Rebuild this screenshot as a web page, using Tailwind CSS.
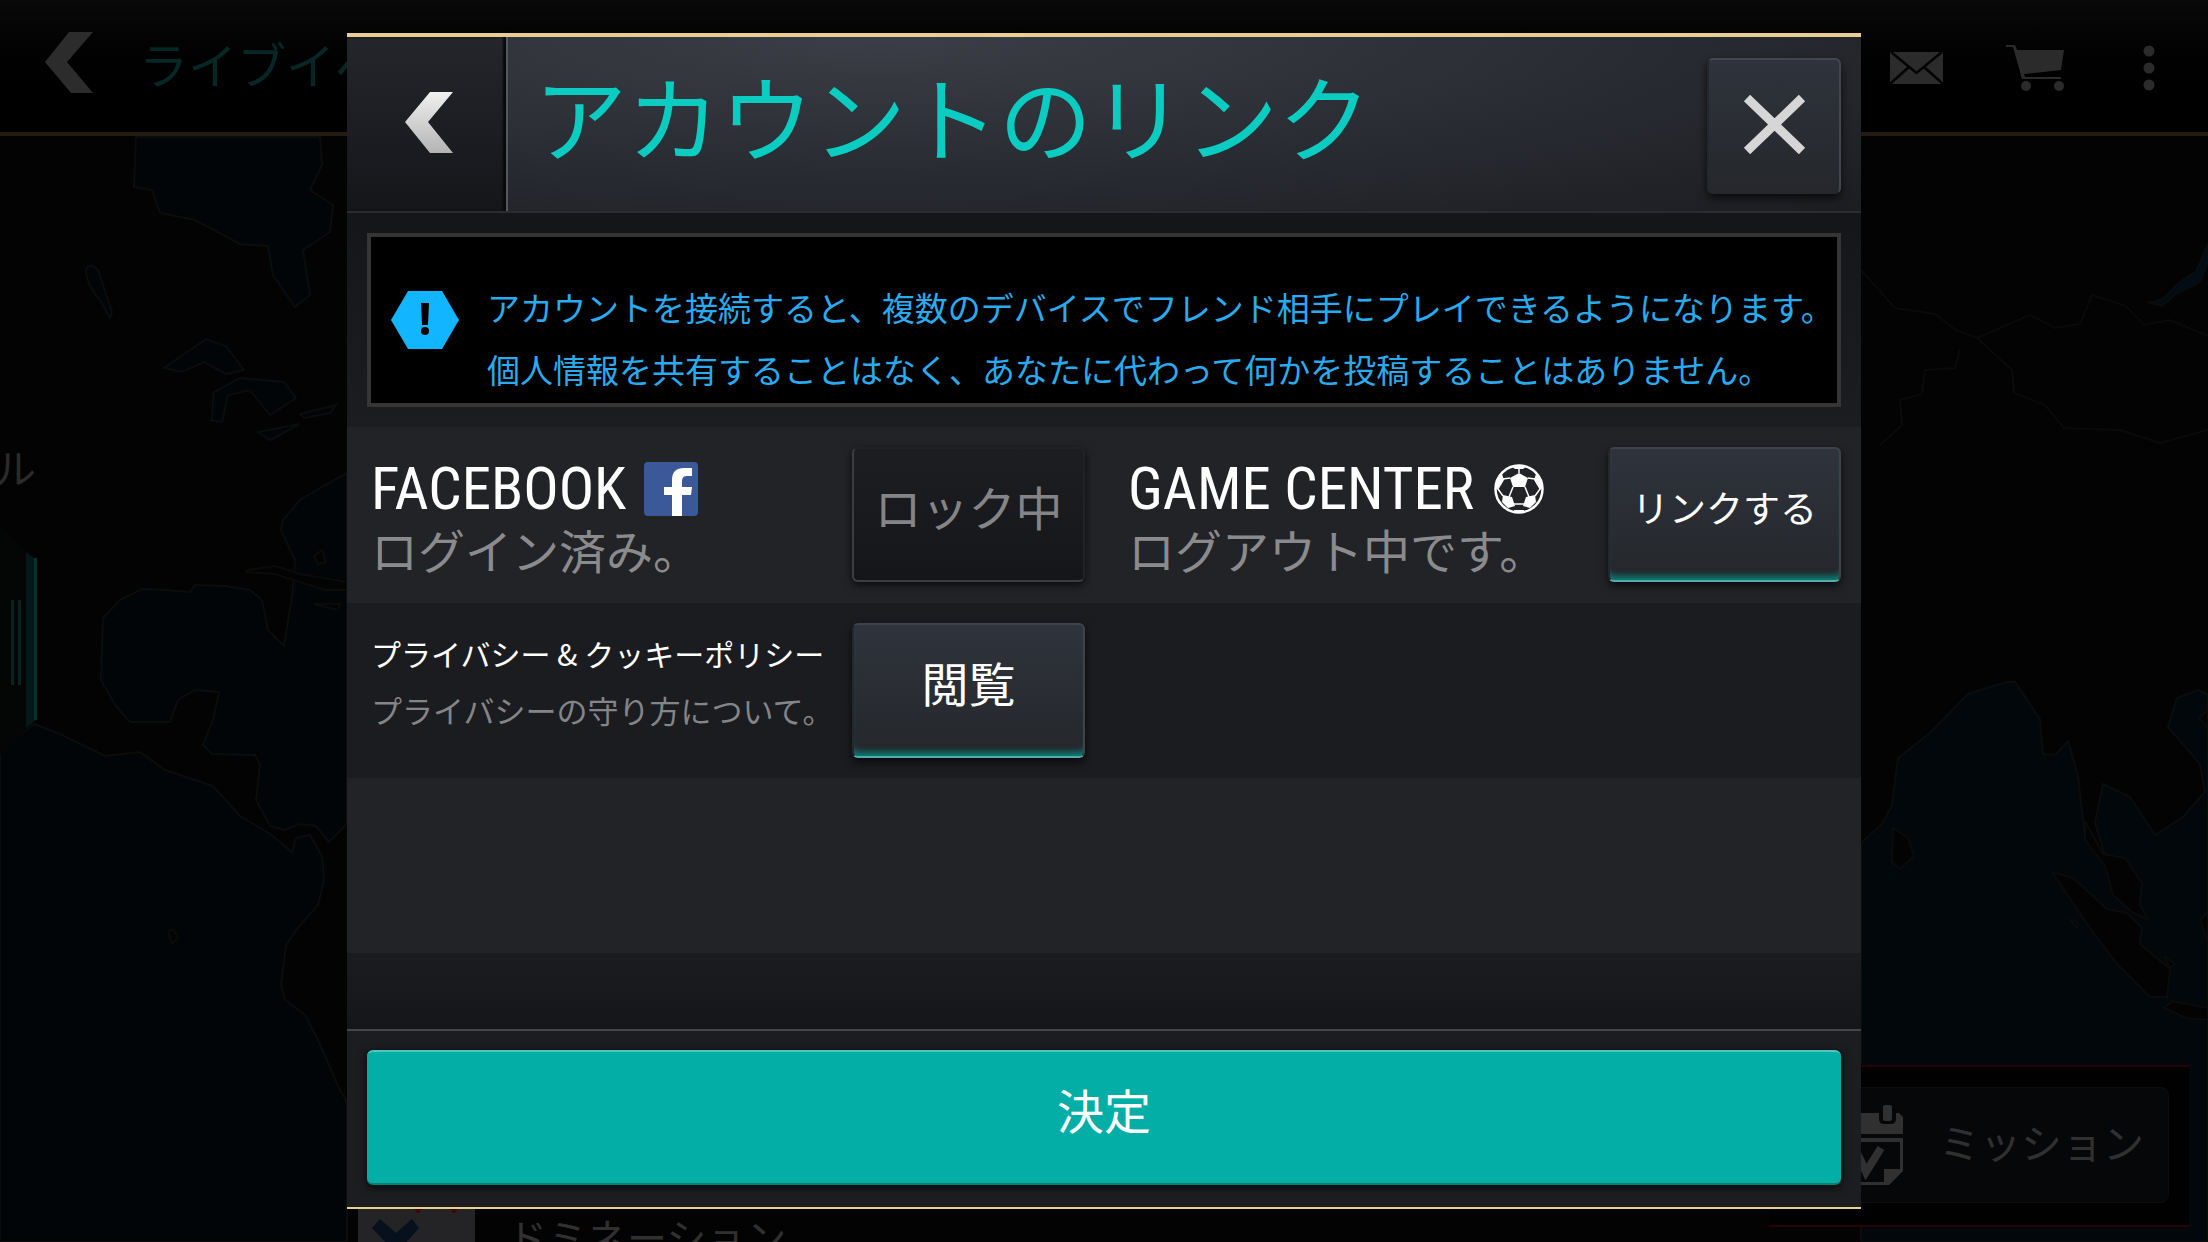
<!DOCTYPE html>
<html lang="ja">
<head>
  <meta charset="UTF-8" />
  <meta name="viewport" content="width=device-width, initial-scale=1.0" />
  <title>アカウントのリンク</title>
  <script src="https://cdn.jsdelivr.net/npm/@tailwindcss/browser@4"></script>
</head>
<body class="relative min-h-screen overflow-hidden bg-[#030303] font-['Roboto_Condensed','Roboto','Noto_Sans_CJK_JP',sans-serif] text-white">

  <!-- World map -->
  <svg class="absolute inset-0 h-full w-full" viewBox="0 0 2208 1242" preserveAspectRatio="xMidYMid slice" aria-hidden="true">
    <g fill="#010508" stroke="#0b0c0c" stroke-width="2">
      <path d="M136 137L134 187L152 190L160 213L195 220L240 244L268 246L273 275L295 307L310 295L303 250L330 232L333 205L310 190L322 165L320 137Z"/>
      <path d="M86 270Q90 262 98 270L112 312L110 318L100 300Q86 284 86 270Z"/>
      <path d="M164 368L190 350L206 339L226 346L244 370L226 374L204 362L182 372Z"/>
      <path d="M212 420L214 392L240 378L284 382L296 398L270 415L250 390L228 395L222 422L210 420Z"/>
      <path d="M300 414L336 405L330 413L304 418Z"/>
      <path d="M258 432L300 424L270 440Z"/>
      <path d="M347 473L325 485L300 500L283 520L281 530L295 560L293 590L284 646L268 630L262 600L250 590L225 586L195 585L190 592L165 590L142 589L120 600L103 618L101 680L115 705L130 722L170 722L178 700L195 690L219 692L213 720L203 745L212 754L255 755L260 765L256 800L270 826L284 830L300 824L316 826L329 842L347 824Z"/>
      <path d="M0 750L34 724L60 734L105 756L140 752L165 770L213 786L240 816L270 834L292 852L296 838L310 835L322 856L324 880L318 905L300 925L286 945L281 985L285 1000L305 1015L318 1040L340 1090L347 1102V1242H0Z"/>
      <path fill="#01070b" d="M1861 843L1883 823L1892 805L1898 758L1930 733L1968 694L2007 682L2015 682L2040 719L2043 754L2055 755L2068 741L2078 776L2085 837L2107 862L2095 823L2103 784L2130 797L2155 835L2183 817L2205 792L2200 764L2168 727L2177 698L2198 690L2208 694V1242H1861Z"/>
      <path fill="#000d14" d="M2148 302Q2160 304 2170 292T2196 272L2208 244V262L2200 282L2176 294L2162 306Z"/>
    </g>
    <g fill="#030303" stroke="#0b0b0a" stroke-width="2">
      <path d="M246 572L248 570L275 566L300 574L347 582V590L325 590L300 582L275 574Z"/>
      <path d="M314 556L322 550L326 562L318 564ZM314 604L340 604L338 610Z"/>
      <path d="M168 932Q174 926 178 938L172 944Z"/>
      <path d="M1893 828L1908 838L1914 856L1900 869L1892 862Z"/>
      <path d="M2052 872L2073 878L2107 909L2127 913L2142 928L2140 944L2170 969L2167 997L2150 997L2117 964L2090 928Z"/>
      <path d="M2085 821L2103 854L2125 858L2142 883L2140 905L2148 919L2133 913L2113 895L2105 866L2085 840Z"/>
      <path d="M2164 1008L2172 1001L2208 1008V1020L2186 1018ZM2070 920L2078 922L2077 928ZM2164 956L2175 964L2170 968ZM2208 912L2200 920L2208 942ZM2208 710L2199 718L2208 728Z"/>
    </g>
    <path fill="none" stroke="#0a0a0a" stroke-width="2" d="M1861 270L1895 308L1935 314L1956 330L1977 338L2030 315L2055 328L2080 324L2092 295L2126 306L2144 325L2170 320L2208 336M1977 338L2012 370L2014 393L2045 405L2064 428L2120 430L2160 443L2208 430M1960 350L1955 368L1925 370L1922 394L1900 400L1902 425L1880 445"/>
    <!-- Side drawer handle -->
    <path fill="#040606" d="M0 525L36 560V720L0 755Z"/>
    <path fill="#051818" d="M26 552L36 560V720L26 728Z"/>
    <path fill="#063231" d="M34 558H37V720H34Z"/>
    <path fill="#052423" d="M11 600H14V685H11ZM18 600H21V685H18Z"/>
  </svg>

  <!-- Page under the dialog -->
  <header class="absolute inset-x-0 top-0 flex h-[136px] items-center justify-between border-b-4 border-[#241b10] bg-linear-to-b from-[#090909] to-black pr-[53px] pb-2 pl-[45px]">
    <div class="flex items-center">
      <button type="button" aria-label="戻る">
        <svg class="h-[61px] w-12" viewBox="0 0 48 61"><path fill="#2c2c2c" d="M24 0H48L22 30L48 61H26L0 30Z"/></svg>
      </button>
      <h2 class="ml-[46px] pt-3 text-[49px] leading-[60px] text-[#052826]">ライブイベント</h2>
    </div>
    <div class="flex items-center gap-[63px] pt-3 text-[#2b2b2b]">
      <button type="button" aria-label="メール">
        <svg class="h-8 w-[53px]" viewBox="0 0 53 32"><path fill="currentColor" d="M0 0H53V32H0Z"/><path fill="none" stroke="#030303" stroke-width="2.5" d="M1 0L26.500 21L52 0M0 32L19 15M53 32L34 15"/></svg>
      </button>
      <button type="button" aria-label="ショップ">
        <svg class="h-[46px] w-[58px]" viewBox="0 0 58 46"><path fill="currentColor" d="M0 0H9L11 5H58L55 25L18 29L19 32H55V34H16L7 2H0Z"/><circle cx="20" cy="41" r="5" fill="currentColor"/><circle cx="53" cy="41" r="5" fill="currentColor"/></svg>
      </button>
      <button type="button" aria-label="メニュー" class="pl-4">
        <svg class="h-[46px] w-3" viewBox="0 0 12 46"><g fill="currentColor"><circle cx="6" cy="6" r="5.500"/><circle cx="6" cy="23" r="5.500"/><circle cx="6" cy="40" r="5.500"/></g></svg>
      </button>
    </div>
  </header>
  <span class="absolute top-[440px] -left-[5px] text-[41px] leading-[60px] text-[#2b2b2b]">ル</span>

  <div class="absolute right-[19px] bottom-[15px] w-[420px] border-y-2 border-[#260003] bg-[#010102] px-5 pt-5 pb-[22px]">
    <button type="button" class="flex h-[116px] w-full items-center justify-end gap-9 rounded-lg border border-[#0c0d0e] bg-[#060708] pr-6 text-[41px] text-[#303030]">
      <svg class="h-20 w-[66px]" viewBox="0 0 66 80">
        <path fill="currentColor" d="M0 8H42V14Q42 19 47 19H54Q59 19 59 14V8H62L66 12V29H0ZM46 2Q46 0 48 0H53Q55 0 55 2V13Q55 16 53 16H48Q46 16 46 13Z"/>
        <path fill="currentColor" d="M0 33H66V66L52 80H0V77H47V64H63V37H0Z"/>
        <path fill="none" stroke="currentColor" stroke-width="8" d="M20 48L29 67L44 43"/>
      </svg>
      <span class="leading-[60px]">ミッション</span>
    </button>
  </div>

  <div class="absolute top-[1178px] left-[358px] flex gap-8">
    <svg class="h-20 w-[117px]" viewBox="0 0 117 80">
      <path fill="#242326" d="M0 0H117V80H0Z"/>
      <path fill="#430309" d="M50 22H70L60 36ZM86 22H106L96 36Z"/>
      <path fill="#07101d" d="M14 50L22 41L38 55L54 41L61 50L44 69V80H32V69Z"/>
    </svg>
    <div class="text-[#303030]">
      <p class="text-[32px] leading-[34px] text-[#3a3010]">NEW</p>
      <p class="text-[40px] leading-[56px]">ドミネーション</p>
    </div>
  </div>

  <!-- Dialog -->
  <main class="relative mx-auto mt-[33px] w-full max-w-[1514px] border-t-4 border-b-2 border-[#e8cf8f] bg-[#1b1c20]" role="dialog" aria-labelledby="dialog-title">
    <header class="flex h-[176px] border-b-2 border-[#2b2c30] bg-radial-[at_35%_0%] from-[#3b3e46] via-[#2a2d34] to-[#1c1d21]">
      <button type="button" aria-label="戻る" class="flex w-[161px] shrink-0 items-center justify-center border-r-2 border-[#55575b] bg-linear-to-b from-[#24262b] to-[#15161a] pb-1 pl-1 shadow-[inset_-3px_0_2px_#08090a]">
        <svg class="h-[61px] w-12" viewBox="0 0 48 61">
          <defs><linearGradient id="steel" x1="0" y1="0" x2="0" y2="1"><stop offset="0" stop-color="#f0f0f0"/><stop offset="1" stop-color="#b4b4b4"/></linearGradient></defs>
          <path fill="url(#steel)" d="M25 0H48L23 30L48 61H25L0 30Z"/>
        </svg>
      </button>
      <h1 id="dialog-title" class="min-w-0 grow self-center pl-[26px] text-[93px] leading-[120px] whitespace-nowrap text-[#0bccc0]">アカウントのリンク</h1>
      <button type="button" aria-label="閉じる" class="mt-[21px] mr-5 flex h-[136px] w-[134px] shrink-0 items-center justify-center rounded-md border-2 border-[#43474d] border-b-[#24272b] border-l-[#24272b] bg-linear-to-b from-[#2f333c] to-[#25272b] pb-1 shadow-[0_4px_8px_#000000b0]">
        <svg class="h-[61px] w-[63px]" viewBox="0 0 63 61"><path stroke="#d6d6d6" stroke-width="9" d="M4 4L59 57M59 4L4 57"/></svg>
      </button>
    </header>

    <section class="bg-linear-to-b from-[#15161a] to-[#1c1d21] px-5 py-5">
      <div class="flex h-[174px] border-4 border-[#353535] bg-black pl-5">
        <svg class="mt-[54px] h-[58px] w-[68px] shrink-0" viewBox="0 0 68 58">
          <path fill="#12b5ff" d="M17 0H51L68 29L51 58H17L0 29Z"/>
          <path fill="#000" d="M30 12H38L37 34H31Z"/><circle cx="34" cy="40" r="4" fill="#000"/>
        </svg>
        <p class="ml-7 pt-[42px] text-[33px] leading-[62px] whitespace-nowrap text-[#29abf0]">アカウントを接続すると、複数のデバイスでフレンド相手にプレイできるようになります。<br />個人情報を共有することはなく、あなたに代わって何かを投稿することはありません。</p>
      </div>
    </section>

    <section class="grid grid-cols-2 bg-[#222327]">
      <div class="flex justify-between py-5 pr-[19px] pl-6">
        <div class="pt-3 whitespace-nowrap">
          <h2 class="flex items-center gap-[18px] text-[59px] leading-[60px]">FACEBOOK
            <svg class="h-[54px] w-[54px]" viewBox="0 0 54 54"><rect width="54" height="54" rx="4" fill="#3b5998"/><path fill="#fff" d="M28 54V33H20V25H28V18Q28 6 40 6H48V14H43Q38 14 38 19V25H48L47 33H38V54Z"/></svg>
          </h2>
          <p class="mt-1 text-[47px] leading-[60px] text-[#8b8b8d]">ログイン済み。</p>
        </div>
        <button type="button" disabled class="h-[135px] w-[233px] shrink-0 rounded-md border-2 border-[#202226] border-b-[#3c3d41] border-l-[#3c3d41] bg-linear-to-b from-[#1c1e22] to-[#15161a] pb-2 text-[47px] text-[#858587] shadow-[0_3px_8px_#000000b0]">ロック中</button>
      </div>
      <div class="flex justify-between py-5 pr-5 pl-6">
        <div class="pt-3 whitespace-nowrap">
          <h2 class="flex items-center gap-5 text-[59px] leading-[60px]">GAME CENTER
            <svg class="h-[50px] w-[50px]" viewBox="0 0 50 50">
              <circle cx="25" cy="25" r="23.500" fill="none" stroke="#fff" stroke-width="2.500"/>
              <g fill="#fff"><path d="M25 9L34 14L31 23H19L16 14Z"/><path d="M9 31L18 33L21 42L14 44L8 38Z"/><path d="M41 31L32 33L29 42L36 44L42 38Z"/><path d="M3 15L8 10L10 16L4 26L2 24Z"/><path d="M47 15L42 10L40 16L46 26L48 24Z"/><path d="M17 2H33L29 5H21Z"/><path d="M20 46H30L29 49H21Z"/></g>
              <path fill="none" stroke="#fff" stroke-width="1.500" d="M25 9V4M34 14L41 15M16 14L9 15M31 23L35 33M19 23L15 33M20 40H30M4 25L9 32M46 25L41 32"/>
            </svg>
          </h2>
          <p class="mt-1 text-[47px] leading-[60px] text-[#8b8b8d]">ログアウト中です。</p>
        </div>
        <button type="button" class="h-[135px] w-[233px] shrink-0 rounded-md border-2 border-[#3f4349] border-b-[#58aaa6] border-l-[#24272b] bg-linear-to-b from-[#2f333c] to-[#25272b] pb-2 text-[37px] shadow-[inset_0_-8px_6px_-4px_#0b7f78,0_4px_8px_#000000b0]">リンクする</button>
      </div>
    </section>

    <section class="grid grid-cols-2">
      <div class="flex justify-between py-5 pr-[19px] pl-6">
        <div class="whitespace-nowrap">
          <h2 class="font-['Noto_Sans_CJK_JP',sans-serif] text-[30px] leading-[60px]">プライバシー &amp; クッキーポリシー</h2>
          <p class="text-[31px] leading-[60px] text-[#858587]">プライバシーの守り方について。</p>
        </div>
        <button type="button" class="h-[135px] w-[233px] shrink-0 rounded-md border-2 border-[#3f4349] border-b-[#58aaa6] border-l-[#24272b] bg-linear-to-b from-[#2f333c] to-[#25272b] pb-2 text-[47px] shadow-[inset_0_-8px_6px_-4px_#0b7f78,0_4px_8px_#000000b0]">閲覧</button>
      </div>
    </section>

    <div class="h-[175px] bg-[#222327]"></div>
    <div class="h-[76px] bg-linear-to-b from-[#1b1c20] to-[#15161a]"></div>

    <footer class="border-t-2 border-[#46474a] bg-[#1c1d21] px-5 pt-[19px] pb-[22px]">
      <button type="button" class="h-[135px] w-full rounded-md border-t-2 border-b-2 border-t-[#4fc4bd] border-b-[#078078] bg-[#03aea6] pb-2 text-[47px] shadow-[0_2px_8px_#000000c0]">決定</button>
    </footer>
  </main>
</body>
</html>
